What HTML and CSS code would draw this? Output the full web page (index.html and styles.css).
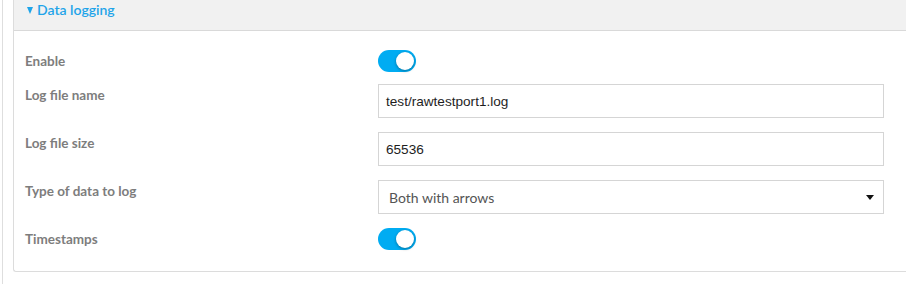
FILE: index.html
```html
<!DOCTYPE html>
<html>
<head>
<meta charset="utf-8">
<link rel="stylesheet" href="styles.css">
</head>
<body>
<div class="page">
  <section class="panel">
    <header class="panel-head">
      <span class="caret"></span>
      <span class="panel-title">Data logging</span>
    </header>
    <div class="panel-body">
      <div class="row row-toggle first">
        <label class="label">Enable</label>
        <div class="control"><span class="toggle"><span class="knob"></span></span></div>
      </div>
      <div class="row">
        <label class="label">Log file name</label>
        <div class="control"><div class="input">test/rawtestport1.log</div></div>
      </div>
      <div class="row">
        <label class="label">Log file size</label>
        <div class="control"><div class="input">65536</div></div>
      </div>
      <div class="row">
        <label class="label">Type of data to log</label>
        <div class="control"><div class="input select"><span class="select-text">Both with arrows</span><span class="select-arrow"></span></div></div>
      </div>
      <div class="row row-toggle last">
        <label class="label">Timestamps</label>
        <div class="control"><span class="toggle"><span class="knob"></span></span></div>
      </div>
    </div>
  </section>
</div>
</body>
</html>
```
FILE: styles.css
```css
html, body {
  margin: 0;
  padding: 0;
  background: #ffffff;
  overflow: hidden;
}
body {
  font-family: "Lato", "Open Sans", sans-serif;
  width: 906px;
  height: 284px;
}
.page {
  margin-left: 2px;
  border-left: 1px solid #dedede;
  padding-left: 10px;
  height: 284px;
  box-sizing: border-box;
}
.panel {
  border: 1px solid #dcdcdc;
  border-top: none;
  border-right: none;
  border-radius: 0 0 0 3px;
  margin-right: -30px;
}
.panel-head {
  height: 30px;
  background: #f1f1f1;
  border-bottom: 1px solid #d9d9d9;
  display: flex;
  align-items: flex-start;
  padding-left: 12px;
}
.caret {
  width: 0;
  height: 0;
  border-left: 3.5px solid transparent;
  border-right: 3.5px solid transparent;
  border-top: 7px solid #1ea4e9;
  margin-left: 1px;
  margin-right: 4px;
  margin-top: 7px;
}
.panel-title {
  color: #1ea4e9;
  font-size: 14px;
  font-weight: 600;
  line-height: 20px;
}
.panel-body {
  padding: 19px 0 21px 11px;
}
.row {
  display: flex;
  margin-top: 14px;
}
.row.first {
  margin-top: 0;
}
.row-toggle + .row {
  margin-top: 12px;
}
.label {
  width: 353px;
  flex: none;
  font-size: 13.5px;
  font-weight: 700;
  color: #7d7d7d;
  line-height: 22px;
}
.control {
  width: 506px;
  flex: none;
}
.toggle {
  display: flex;
  justify-content: flex-end;
  align-items: center;
  width: 38px;
  height: 22px;
  box-sizing: border-box;
  padding: 2px;
  border-radius: 11px;
  background: #00acf2;
}
.knob {
  width: 18px;
  height: 18px;
  border-radius: 50%;
  background: #ffffff;
  box-shadow: 0 1px 3px rgba(0, 0, 0, 0.35);
}
.input {
  height: 34px;
  box-sizing: border-box;
  border: 1px solid #d5d5d5;
  padding: 0 7px;
  display: flex;
  align-items: center;
  font-family: "Liberation Sans", Arial, sans-serif;
  font-size: 13.6px;
  color: #1e1e1e;
}
.select {
  justify-content: space-between;
  padding: 0 9px 0 10px;
}
.select-text {
  font-family: "Lato", "Open Sans", sans-serif;
  color: #555555;
  font-size: 14px;
}
.select-arrow {
  width: 0;
  height: 0;
  border-left: 4px solid transparent;
  border-right: 4px solid transparent;
  border-top: 5px solid #111111;
}
```
